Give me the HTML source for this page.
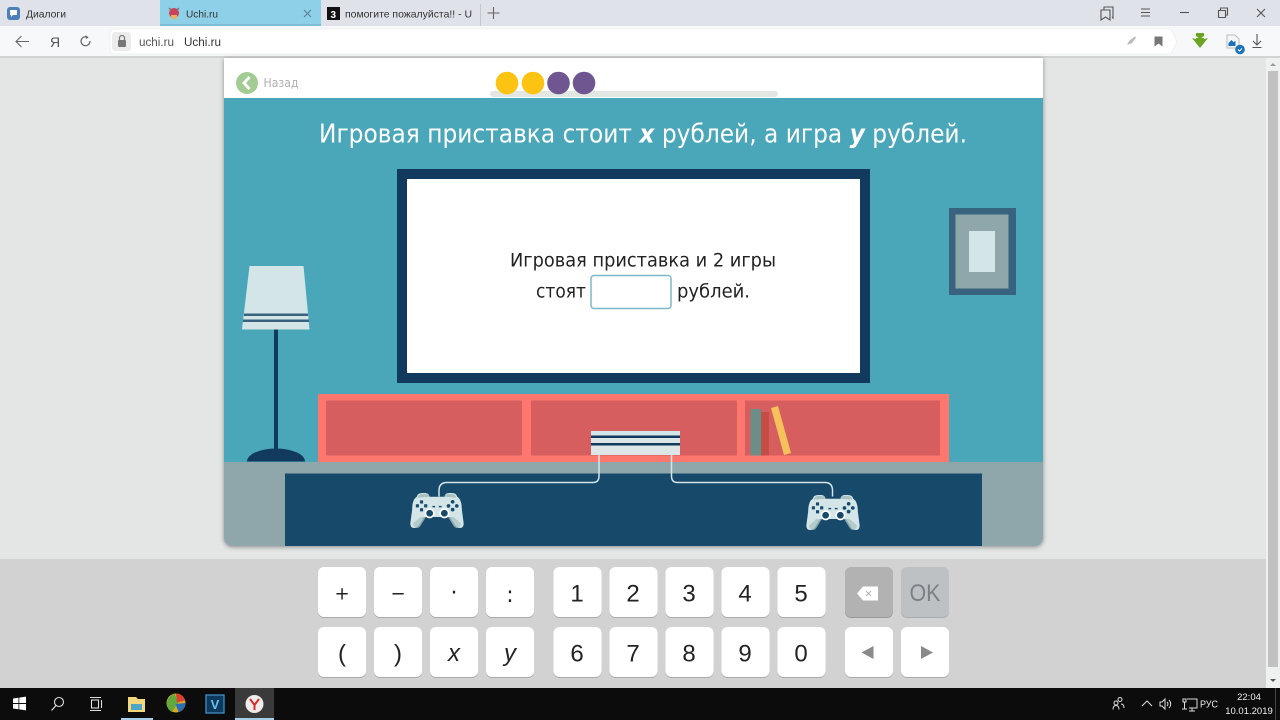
<!DOCTYPE html>
<html><head><meta charset="utf-8"><title>Uchi.ru</title>
<style>
html,body{margin:0;padding:0;width:1280px;height:720px;overflow:hidden;background:#e4e6e5}
svg{display:block}
text{font-family:"DejaVu Sans","Liberation Sans",sans-serif}
.c{font-family:"Liberation Sans",sans-serif}
</style></head><body>
<svg xmlns="http://www.w3.org/2000/svg" width="1280" height="720" viewBox="0 0 1280 720">
<defs>
<filter id="sh" x="-5%" y="-5%" width="110%" height="110%"><feDropShadow dx="0" dy="1" stdDeviation="2.5" flood-color="#000" flood-opacity=".4"/></filter>
<g id="pad">
<path d="M-22 -14q1-4 6-4h3q4 0 5 4h16q1-4 5-4h3q5 0 6 4q5 3 5 14l2 15q0 5-4 5q-4 0-6-4l-5-8h-28l-5 8q-2 4-6 4q-4 0-4-5l2-15q0-11 5-14z" fill="#d3e5e7"/>
<path d="M-21 -13q1-4 5-4h4q3 0 4 3zM8 -14q1-3 4-3h4q4 0 5 4z" fill="#a9c1c3"/>
<path d="M-26 15q0 4 4 5q3 0 5-4l5-8h-6zM26 15q0 4-4 5q-3 0-5-4l-5-8h6z" fill="#a9c1c3" opacity=".75"/>
<g fill="#17496b"><rect x="-18.500" y="-10" width="3.400" height="3.400"/><rect x="-18.500" y="-1.500" width="3.400" height="3.400"/><rect x="-23" y="-5.800" width="3.400" height="3.400"/><rect x="-14" y="-5.800" width="3.400" height="3.400"/><circle cx="17" cy="-8.500" r="2"/><circle cx="17" cy="0" r="2"/><circle cx="12.500" cy="-4" r="2"/><circle cx="21.500" cy="-4" r="2"/><rect x="-5" y="-4" width="3" height="1.500"/><rect x="2" y="-4" width="3" height="1.500"/></g>
<circle cx="-8" cy="4" r="4.600" fill="#17496b" stroke="#fff" stroke-width="1.800"/><circle cx="8" cy="4" r="4.600" fill="#17496b" stroke="#fff" stroke-width="1.800"/>
</g>
</defs>

<!-- tab bar -->
<rect width="1280" height="26" fill="#dfe2e8"/>
<rect x="160" y="0" width="161" height="26" fill="#8ed0e8"/>
<rect x="160" y="24" width="161" height="2" fill="#7fbdd4"/>
<rect x="7" y="7" width="13" height="13" rx="3" fill="#4d7fb8"/><path d="M10 10h7v5h-4l-2 2v-2h-1z" fill="#fff"/>
<text class="c" x="26" y="17.500" font-size="10.500" fill="#333" textLength="40" lengthAdjust="spacingAndGlyphs">Диалоги</text>
<circle cx="174" cy="13" r="5" fill="#c9415b"/><path d="M169 8l2 2M179 8l-2 2" stroke="#777" stroke-width="1.500"/><rect x="171" y="15" width="6" height="4" fill="#e8b264"/>
<text class="c" x="186" y="17.500" font-size="10.500" fill="#333" textLength="32" lengthAdjust="spacingAndGlyphs">Uchi.ru</text>
<path d="M304 10l7 7M311 10l-7 7" stroke="#5b7f8e" stroke-width="1"/>
<rect x="327" y="7" width="13" height="13" fill="#111"/><text class="c" x="330.500" y="18" font-size="10" font-weight="bold" fill="#fff">3</text>
<text class="c" x="345" y="17.500" font-size="10.500" fill="#333" textLength="127" lengthAdjust="spacingAndGlyphs">помогите пожалуйста!! - U</text>
<rect x="480" y="4" width="1" height="22" fill="#c4c7cd"/>
<path d="M487.500 13h12M493.500 7v12" stroke="#666" stroke-width="1.100"/>
<!-- window controls -->
<g fill="none" stroke="#555" stroke-width="1.100">
<path d="M1104 10v-3h9v11l-1-1M1101 10h9v10l-4.500-3-4.500 3z"/>
<path d="M1141 9h9M1141 12.500h9M1141 16h9"/>
<path d="M1180 12.500h9"/>
<path d="M1218.500 10.500h7v7h-7zM1220.500 10.500v-2.500h7v7h-2"/>
<path d="M1257 9l8 8M1265 9l-8 8"/>
</g>

<!-- address bar -->
<rect y="26" width="1280" height="32" fill="#f7f8f9"/>
<rect y="56" width="1280" height="2.500" fill="#d0d2d3"/>
<path d="M110 33a4 4 0 0 1 4-4h1057l6 13-6 12H114a4 4 0 0 1-4-4z" fill="#fff" stroke="#eff0f1"/>
<path d="M29 41.500H16M21.500 36l-5.500 5.500 5.500 5.500" fill="none" stroke="#666" stroke-width="1.100"/>
<text class="c" x="50" y="47" font-size="14" fill="#555">Я</text>
<path d="M90 41a4.500 4.500 0 1 1-2-3.500" fill="none" stroke="#666" stroke-width="1.200"/><path d="M85.500 35l3 2.500-2.500 1.500z" fill="#666"/>
<rect x="112" y="32" width="19" height="19" rx="3" fill="#ececec"/>
<rect x="118" y="40" width="8" height="7" rx="1" fill="#777"/><path d="M119.500 40v-2a2.500 2.500 0 0 1 5 0v2" fill="none" stroke="#777" stroke-width="1.200"/>
<text class="c" x="139" y="46" font-size="11.500" fill="#555" textLength="35" lengthAdjust="spacingAndGlyphs">uchi.ru</text>
<text class="c" x="184" y="46" font-size="11.500" fill="#333" textLength="37" lengthAdjust="spacingAndGlyphs">Uchi.ru</text>
<path d="M1127 45l2-4 5-4 2-.5-.5 2-4 5-2 .5zM1126 46l2-2" fill="#bbb"/>
<path d="M1154.500 36.500h8v10l-4-3-4 3z" fill="#777"/>
<path d="M1196 33h8v3l-4 3-4-3zM1192 38l4 1v-1h8v1l4-1-8 10z" fill="#6ea423"/>
<path d="M1227 35h8l4 4v9h-12z" fill="#f4f6f8" stroke="#b9bdc2"/><path d="M1228.500 46v-3l3-3 2 2 2-1v5z" fill="#1c6fbd"/>
<circle cx="1240" cy="49.500" r="4.800" fill="#1c72b8"/><path d="M1238 49.500l1.500 1.500 2.500-2.500" fill="none" stroke="#fff" stroke-width="1"/>
<path d="M1257 34v11M1253 41l4 4 4-4M1252.500 47.500h9" fill="none" stroke="#555" stroke-width="1.100"/>

<!-- page bg -->
<rect y="58" width="1268" height="501" fill="#e4e6e5"/>
<rect y="559" width="1266" height="129" fill="#d2d2d2"/>
<rect x="1266" y="58" width="14" height="630" fill="#eff0f0"/>
<rect x="1268" y="71" width="10" height="596" fill="#c1c1c1"/>
<path d="M1270 66l3-3 3 3z" fill="#999"/><path d="M1270 679h6l-3 3z" fill="#555"/>

<!-- card -->
<path d="M224 58h819v480a8 8 0 0 1-8 8H232a8 8 0 0 1-8-8z" fill="#8fa6aa" filter="url(#sh)"/>
<rect x="224" y="58" width="819" height="40" fill="#fff"/>
<circle cx="247" cy="83" r="11" fill="#a3cc94"/><path d="M249.500 77l-5.500 6 5.500 6" fill="none" stroke="#fff" stroke-width="2.800"/>
<text x="263.500" y="87" font-size="12" fill="#b0b0b0" textLength="35" lengthAdjust="spacingAndGlyphs">Назад</text>
<rect x="490" y="91" width="288" height="6" rx="3" fill="#e3e7e3"/>
<circle cx="507" cy="83" r="11.300" fill="#fdc313"/><circle cx="533" cy="83" r="11.300" fill="#fdc313"/>
<circle cx="558.500" cy="83" r="11.300" fill="#6f5690"/><circle cx="584" cy="83" r="11.300" fill="#6f5690"/>
<rect x="224" y="98" width="819" height="364" fill="#4aa7b9"/>

<text x="319" y="142.500" font-size="26" fill="#fff" textLength="648" lengthAdjust="spacingAndGlyphs">Игровая приставка стоит <tspan font-weight="bold" font-style="italic">x</tspan> рублей, а игра <tspan font-weight="bold" font-style="italic">y</tspan> рублей.</text>

<!-- TV -->
<rect x="397" y="169" width="473" height="214" fill="#113a5e"/>
<rect x="407" y="179" width="453" height="194" fill="#fff"/>
<text x="510" y="266.500" font-size="18.500" fill="#222" textLength="266" lengthAdjust="spacingAndGlyphs">Игровая приставка и 2 игры</text>
<text x="536" y="297.500" font-size="18.500" fill="#222" textLength="50" lengthAdjust="spacingAndGlyphs">стоят</text>
<rect x="591" y="275.500" width="80" height="33" rx="3" fill="#fff" stroke="#7db8c9" stroke-width="1.500"/>
<text x="677" y="297.500" font-size="18.500" fill="#222" textLength="73" lengthAdjust="spacingAndGlyphs">рублей.</text>

<!-- picture -->
<rect x="949" y="208" width="67" height="87" fill="#37637f"/>
<rect x="955.500" y="214.500" width="53" height="74" fill="#8fa6aa"/>
<rect x="969" y="231" width="26" height="41" fill="#d3e5e7"/>

<!-- lamp -->
<rect x="274" y="328" width="4" height="126" fill="#113a5e"/>
<path d="M247 461.500a29 13 0 0 1 58 0z" fill="#113a5e"/>
<path d="M249.500 266h54l6 63.500h-67.500z" fill="#d3e5e7"/>
<rect x="244" y="313.500" width="64" height="2.500" fill="#37637f"/><rect x="243" y="319.500" width="66" height="2.500" fill="#37637f"/>

<!-- shelf -->
<rect x="318" y="394" width="631" height="68" fill="#fe776f"/>
<rect x="326" y="400.500" width="196" height="55" fill="#d75e5e"/>
<rect x="531" y="400.500" width="206" height="55" fill="#d75e5e"/>
<rect x="745" y="400.500" width="195" height="55" fill="#d75e5e"/>
<rect x="750.500" y="409" width="10.500" height="46.500" fill="#6b8f88"/>
<rect x="761" y="412" width="8" height="43.500" fill="#c44d47"/>
<path d="M771 408l7-2 13 47-7 2z" fill="#f5c15a"/>
<!-- console -->
<rect x="591" y="431" width="89" height="24" fill="#dde5e7"/>
<rect x="591" y="431" width="89" height="6" fill="#d3e5e7"/>
<rect x="591" y="435.500" width="89" height="2.500" fill="#113a5e"/>
<rect x="591" y="443" width="89" height="2.500" fill="#113a5e"/>

<!-- rug -->
<rect x="285" y="473.500" width="697" height="72.500" fill="#17496b"/>
<g fill="none" stroke="#d3e5e7" stroke-width="1.500">
<path d="M599 455v21q0 6.500-6 6.500H447q-8 0-8 8v6"/>
<path d="M671.500 455v21q0 6.500 6 6.500H825q7.500 0 7.500 8v6"/>
</g>
<use href="#pad" transform="translate(437 509.600) scale(.92)"/>
<use href="#pad" transform="translate(833 511.600) scale(.92)"/>

<!-- keyboard keys -->
<g fill="#fff" stroke="none">
<g id="keys">
<g fill="#a9a9a9">
<rect x="318" y="568" width="48" height="50" rx="6"/><rect x="374" y="568" width="48" height="50" rx="6"/><rect x="430" y="568" width="48" height="50" rx="6"/><rect x="486" y="568" width="48" height="50" rx="6"/>
<rect x="553.500" y="568" width="48" height="50" rx="6"/><rect x="609.500" y="568" width="48" height="50" rx="6"/><rect x="665.500" y="568" width="48" height="50" rx="6"/><rect x="721.500" y="568" width="48" height="50" rx="6"/><rect x="777.500" y="568" width="48" height="50" rx="6"/>
<rect x="318" y="628" width="48" height="50" rx="6"/><rect x="374" y="628" width="48" height="50" rx="6"/><rect x="430" y="628" width="48" height="50" rx="6"/><rect x="486" y="628" width="48" height="50" rx="6"/>
<rect x="553.500" y="628" width="48" height="50" rx="6"/><rect x="609.500" y="628" width="48" height="50" rx="6"/><rect x="665.500" y="628" width="48" height="50" rx="6"/><rect x="721.500" y="628" width="48" height="50" rx="6"/><rect x="777.500" y="628" width="48" height="50" rx="6"/>
<rect x="845" y="628" width="48" height="50" rx="6"/><rect x="901" y="628" width="48" height="50" rx="6"/>
<rect x="845" y="568" width="48" height="50" rx="6" fill="#9a9a9a"/><rect x="901" y="568" width="48" height="50" rx="6" fill="#a7abae"/>
</g>
<rect x="318" y="567" width="48" height="50" rx="6"/><rect x="374" y="567" width="48" height="50" rx="6"/><rect x="430" y="567" width="48" height="50" rx="6"/><rect x="486" y="567" width="48" height="50" rx="6"/>
<rect x="553.500" y="567" width="48" height="50" rx="6"/><rect x="609.500" y="567" width="48" height="50" rx="6"/><rect x="665.500" y="567" width="48" height="50" rx="6"/><rect x="721.500" y="567" width="48" height="50" rx="6"/><rect x="777.500" y="567" width="48" height="50" rx="6"/>
<rect x="318" y="627" width="48" height="50" rx="6"/><rect x="374" y="627" width="48" height="50" rx="6"/><rect x="430" y="627" width="48" height="50" rx="6"/><rect x="486" y="627" width="48" height="50" rx="6"/>
<rect x="553.500" y="627" width="48" height="50" rx="6"/><rect x="609.500" y="627" width="48" height="50" rx="6"/><rect x="665.500" y="627" width="48" height="50" rx="6"/><rect x="721.500" y="627" width="48" height="50" rx="6"/><rect x="777.500" y="627" width="48" height="50" rx="6"/>
<rect x="845" y="627" width="48" height="50" rx="6"/><rect x="901" y="627" width="48" height="50" rx="6"/>
<rect x="845" y="567" width="48" height="50" rx="6" fill="#b2b2b2"/><rect x="901" y="567" width="48" height="50" rx="6" fill="#bdc1c4"/>
</g></g>
<g fill="#222" text-anchor="middle">
<text x="342" y="599.500" font-size="18">+</text><text x="398" y="599.500" font-size="18">−</text><text x="454" y="600" font-size="22">·</text><text x="510" y="602" font-size="22">:</text>
</g>
<g class="c" font-size="24" fill="#222" text-anchor="middle" style="font-family:'Liberation Sans',sans-serif">
<text class="c" x="577" y="601.500">1</text><text class="c" x="633" y="601.500">2</text><text class="c" x="689" y="601.500">3</text><text class="c" x="745" y="601.500">4</text><text class="c" x="801" y="601.500">5</text>
<text class="c" x="342" y="661.500">(</text><text class="c" x="398" y="661.500">)</text><text class="c" x="454" y="661" font-style="italic">x</text><text class="c" x="510" y="661" font-style="italic">y</text>
<text class="c" x="577" y="661.500">6</text><text class="c" x="633" y="661.500">7</text><text class="c" x="689" y="661.500">8</text><text class="c" x="745" y="661.500">9</text><text class="c" x="801" y="661.500">0</text>
</g>
<path d="M857 593.500l6-7h15v14h-15z" fill="#fff"/><path d="M866 591l5 5M871 591l-5 5" stroke="#b2b2b2" stroke-width="1"/>
<text class="c" x="909.500" y="601" font-size="24" fill="#7c8084" textLength="31" lengthAdjust="spacingAndGlyphs">OK</text>
<path d="M873.500 646v13l-12-6.500z" fill="#8a8a8a"/><path d="M921 646v13l12-6.500z" fill="#8a8a8a"/>

<!-- taskbar -->
<rect y="688" width="1280" height="32" fill="#0c0c0c"/>
<rect x="235" y="688" width="39" height="32" fill="#3a3a3a"/>
<rect x="121" y="718" width="32" height="2" fill="#a6cdea"/><rect x="235" y="718" width="39" height="2" fill="#a6cdea"/>
<path d="M13 698.500l5.500-.8v5.300H13zM19.300 697.600l6.700-1v6.400h-6.700zM13 704h5.500v5.300l-5.500-.8zM19.300 704H26v6.400l-6.700-1z" fill="#fff"/>
<circle cx="59" cy="702" r="4.500" fill="none" stroke="#ddd" stroke-width="1.100"/><path d="M56 705.500l-4.500 5" stroke="#ddd" stroke-width="1.200"/>
<g fill="none" stroke="#ddd" stroke-width="1.100"><rect x="91.500" y="700" width="7" height="8"/><path d="M90 697.500h11M90 710.500h11M101.500 700v8"/></g>
<path d="M128 697h8l2 2h7v13h-17z" fill="#f3d77c"/><rect x="131" y="704" width="11" height="6" fill="#4fa6c7"/>
<circle cx="176" cy="703" r="9.500" fill="#e2a522"/><path d="M167 704a9.500 9.500 0 0 1 8-10l3 9-6 9a9 9 0 0 1-5-8z" fill="#5fa93d"/><path d="M176 693.500a9.500 9.500 0 0 1 9 7l-8 2z" fill="#d8412f"/><path d="M185.500 703a9.500 9.500 0 0 1-7 9l-3-8z" fill="#2d6fb7"/>
<rect x="206" y="695" width="18" height="18" fill="#0d3a5c" stroke="#3d8fc4" stroke-width="1.300"/><text class="c" x="215" y="709" font-size="13" font-weight="bold" fill="#6ac0ea" text-anchor="middle">V</text>
<circle cx="254.500" cy="704" r="9" fill="#f1ecec"/><path d="M250 699l4.500 6 4.500-6M254.500 705v5" fill="none" stroke="#d92b2b" stroke-width="2"/>
<g fill="none" stroke="#ddd" stroke-width="1"><circle cx="1116" cy="703" r="2"/><circle cx="1120" cy="699.500" r="2"/><path d="M1113 709.500q0-4 3-4t3 4M1121 704q3 0 3 4"/>
<path d="M1142 706l5-5 5 5"/><path d="M1160 702h2l3-3v10l-3-3h-2zM1167 702q2 2 0 4M1169 700q3.500 4 0 8"/>
<path d="M1183 699h3v3h-3zM1184.500 702v7M1182 709h5M1187 699h10v9h-8M1192 708v2.500M1189 711h6"/></g>
<text class="c" x="1200" y="707.500" font-size="10.500" fill="#eee" textLength="18" lengthAdjust="spacingAndGlyphs">РУС</text>
<text class="c" x="1249" y="700" font-size="9.500" fill="#eee" text-anchor="middle">22:04</text>
<text class="c" x="1249" y="714" font-size="9.500" fill="#eee" text-anchor="middle">10.01.2019</text>
<rect x="1275" y="688" width="1" height="32" fill="#444"/>
</svg>
</body></html>
